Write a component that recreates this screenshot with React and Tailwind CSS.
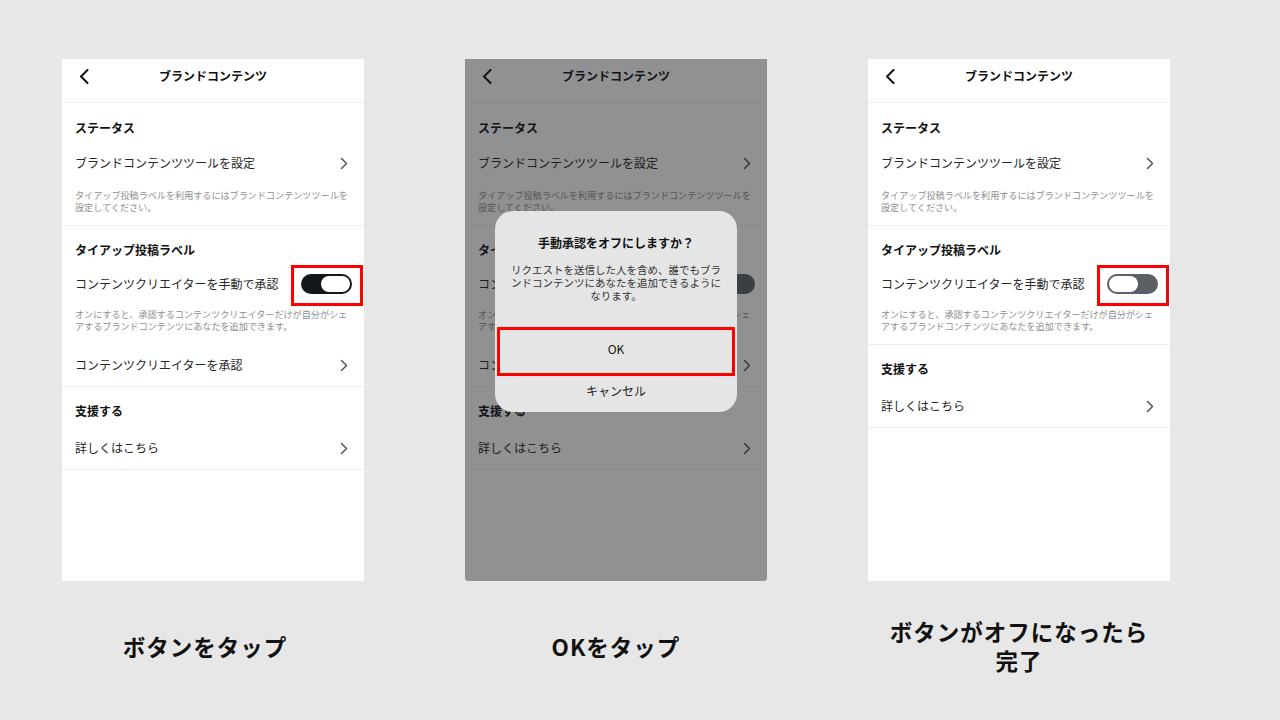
import React from 'react';

const font = "font-['Noto_Sans_CJK_JP','Noto_Sans',sans-serif]";

function Chevron() {
  return (
    <svg width="8" height="13" viewBox="0 0 8 13" className="shrink-0">
      <polyline points="1.5,1.5 6.5,6.5 1.5,11.5" fill="none" stroke="#555" strokeWidth="1.5" strokeLinecap="round" strokeLinejoin="round" />
    </svg>
  );
}

function BackArrow() {
  return (
    <svg width="11" height="15" viewBox="0 0 11 15">
      <polyline points="8.5,1 2,7.5 8.5,14" fill="none" stroke="#111" strokeWidth="2" strokeLinecap="round" strokeLinejoin="round" />
    </svg>
  );
}

function Toggle({ on }) {
  return (
    <div className={`w-[51px] h-[20px] rounded-full flex items-center px-[2px] shrink-0 ${on ? 'bg-[#14171a] justify-end' : 'bg-[#5b6066] justify-start'}`}>
      <div className="w-[29px] h-[16px] rounded-full bg-white" />
    </div>
  );
}

function Divider() {
  return <div className="h-px bg-[#efefef]" />;
}

function Row({ label }) {
  return (
    <div className="h-[20px] pl-[13px] pr-[16px] flex items-center justify-between">
      <span className="text-[12px] leading-[20px] text-[#262626]">{label}</span>
      <Chevron />
    </div>
  );
}

function Heading({ children }) {
  return (
    <div className="h-[48px] pl-[13px] flex items-center text-[12px] font-bold text-[#111]">{children}</div>
  );
}

function Note({ children, className = '' }) {
  return (
    <div className={`pl-[13px] text-[9.1px] leading-[12px] text-[#8e8e8e] whitespace-nowrap ${className}`}>{children}</div>
  );
}

function Screen({ on, showApprove }) {
  return (
    <div className="bg-white h-full">
      <div className="h-[43px] relative flex justify-center pt-[9px]">
        <div className="absolute left-[17px] top-[10px]"><BackArrow /></div>
        <span className="text-[12px] leading-[16px] font-bold text-[#111]">ブランドコンテンツ</span>
      </div>
      <Divider />

      <div className="h-[50px] pl-[13px] flex items-center text-[12px] font-bold text-[#111]">ステータス</div>
      <Row label="ブランドコンテンツツールを設定" />
      <Note className="mt-[16px] pb-[12px]">
        タイアップ投稿ラベルを利用するにはブランドコンテンツツールを<br />設定してください。
      </Note>
      <Divider />

      <Heading>タイアップ投稿ラベル</Heading>
      <div className="h-[20px] pl-[13px] pr-[12px] flex items-center justify-between">
        <span className="text-[12px] leading-[20px] text-[#262626]">コンテンツクリエイターを手動で承認</span>
        <Toggle on={on} />
      </div>
      <Note className="mt-[14px]">
        オンにすると、承認するコンテンツクリエイターだけが自分がシェ<br />アするブランドコンテンツにあなたを追加できます。
      </Note>
      {showApprove ? (
        <div className="mt-[23px] pb-[11px]"><Row label="コンテンツクリエイターを承認" /></div>
      ) : (
        <div className="h-[12px]" />
      )}
      <Divider />

      <Heading>支援する</Heading>
      <div className="mt-[3px] pb-[11px]"><Row label="詳しくはこちら" /></div>
      <Divider />
    </div>
  );
}

function RedBox({ className }) {
  return <div className={`absolute border-[3px] border-[#ff0000] ${className}`} />;
}

function Caption({ children, className = '' }) {
  return (
    <div className={`h-[92px] mt-[19px] flex items-center justify-center text-center text-[22.5px] leading-[29px] font-bold text-[#111] tracking-[1px] ${className}`}>
      {children}
    </div>
  );
}

export default function App() {
  return (
    <div className={`w-[1280px] h-[720px] bg-[#e7e7e7] pt-[59px] pl-[62px] ${font}`}>
      <div className="flex gap-[101px]">
        <div className="w-[302px]">
          <div className="relative h-[522px]">
            <Screen on showApprove />
            <RedBox className="left-[229px] top-[206px] w-[72px] h-[41px]" />
          </div>
          <Caption className="pr-[16px]">ボタンをタップ</Caption>
        </div>

        <div className="w-[302px]">
          <div className="relative h-[522px] overflow-hidden rounded-b-[3px]">
            <Screen on={false} showApprove />
            <div className="absolute inset-0 bg-[rgba(20,26,30,0.48)]" />
            <div className="absolute left-[30px] top-[152px] w-[242px] h-[201px] rounded-[18px] bg-[#e5e5e6] flex flex-col items-center">
              <div className="mt-[23px] text-[12px] leading-[18px] font-bold text-[#111]">手動承認をオフにしますか？</div>
              <div className="mt-[11px] text-[10.5px] leading-[13px] text-[#333] text-center whitespace-nowrap">
                リクエストを送信した人を含め、誰でもブラ<br />ンドコンテンツにあなたを追加できるように<br />なります。
              </div>
              <div className="mt-[22px] w-full h-[49px] flex items-center justify-center text-[12px] text-[#111]">OK</div>
              <div className="mt-[9px] text-[12px] leading-[18px] text-[#222]">キャンセル</div>
            </div>
            <RedBox className="left-[32px] top-[268px] w-[238px] h-[49px]" />
          </div>
          <Caption>OKをタップ</Caption>
        </div>

        <div className="w-[302px]">
          <div className="relative h-[522px]">
            <Screen on={false} showApprove={false} />
            <RedBox className="left-[229px] top-[206px] w-[72px] h-[41px]" />
          </div>
          <Caption>ボタンがオフになったら<br />完了</Caption>
        </div>
      </div>
    </div>
  );
}
